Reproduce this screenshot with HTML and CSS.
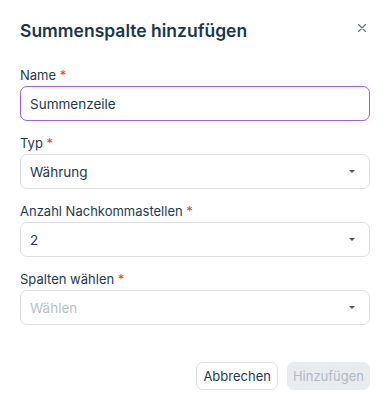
FILE: index.html
```html
<!DOCTYPE html>
<html lang="de">
<head>
<meta charset="utf-8">
<link rel="stylesheet" href="styles.css">
</head>
<body>
<div class="dialog">
  <div class="header">
    <h1 class="title">Summenspalte hinzufügen</h1>
    <button class="close" aria-label="Schließen">
      <svg width="10" height="10" viewBox="0 0 10 10"><path d="M1.5 1.5L8.5 8.5M8.5 1.5L1.5 8.5" stroke="#5a6f80" stroke-width="1.1" fill="none" stroke-linecap="round"/></svg>
    </button>
  </div>
  <div class="fields">
    <div class="field">
      <label class="label">Name <span class="req">*</span></label>
      <div class="input focused"><span class="value">Summenzeile</span></div>
    </div>
    <div class="field">
      <label class="label">Typ <span class="req">*</span></label>
      <div class="input"><span class="value">Währung</span><span class="caret"></span></div>
    </div>
    <div class="field">
      <label class="label">Anzahl Nachkommastellen <span class="req">*</span></label>
      <div class="input"><span class="value">2</span><span class="caret"></span></div>
    </div>
    <div class="field">
      <label class="label">Spalten wählen <span class="req">*</span></label>
      <div class="input"><span class="value placeholder">Wählen</span><span class="caret"></span></div>
    </div>
  </div>
  <div class="footer">
    <button class="btn btn-outline">Abbrechen</button>
    <button class="btn btn-disabled">Hinzufügen</button>
  </div>
</div>
</body>
</html>
```
FILE: styles.css
```css
* { box-sizing: border-box; }
html, body { margin: 0; padding: 0; background: #fff; }
body {
  font-family: Inter, "Noto Sans", sans-serif;
  color: #1f3a4d;
  width: 390px;
  height: 409px;
  overflow: hidden;
}
.dialog {
  padding: 20px 20px 0 20px;
}
.header {
  display: flex;
  justify-content: space-between;
  align-items: center;
  height: 22px;
}
.title {
  margin: 0;
  font-size: 17.5px;
  line-height: 22px;
  font-weight: 600;
  color: #1b374c;
}
.close {
  border: 0;
  background: none;
  padding: 0;
  width: 12px;
  height: 12px;
  display: flex;
  align-items: center;
  justify-content: center;
  margin-top: -7px;
  margin-right: 2px;
}
.fields {
  margin-top: 23px;
  display: flex;
  flex-direction: column;
  gap: 12px;
}
.field {
  display: flex;
  flex-direction: column;
  gap: 1px;
}
.label {
  font-size: 13px;
  line-height: 20px;
  color: #1f3a4d;
}
.req { color: #d8472d; }
.input {
  height: 35px;
  border: 1px solid #dde1e6;
  border-radius: 7px;
  display: flex;
  align-items: center;
  justify-content: space-between;
  padding: 0 14px 0 9px;
  font-size: 13.5px;
}
.input.focused { border-color: #a45de7; }
.value { color: #1f3a4d; }
.placeholder { color: #b9bfc7; }
.caret {
  width: 0;
  height: 0;
  border-left: 3.5px solid transparent;
  border-right: 3.5px solid transparent;
  border-top: 3.5px solid #46596a;
}
.footer {
  margin-top: 37px;
  display: flex;
  justify-content: flex-end;
  gap: 9px;
}
.btn {
  height: 28px;
  border-radius: 7px;
  font-family: inherit;
  font-size: 13px;
  padding: 0 6px;
  line-height: 26px;
}
.btn-outline {
  background: #fff;
  border: 1px solid #dde1e6;
  color: #1f3a4d;
}
.btn-disabled {
  background: #e9ecef;
  border: 1px solid #e9ecef;
  color: #b3b9c0;
  padding: 0 5px;
}
```
